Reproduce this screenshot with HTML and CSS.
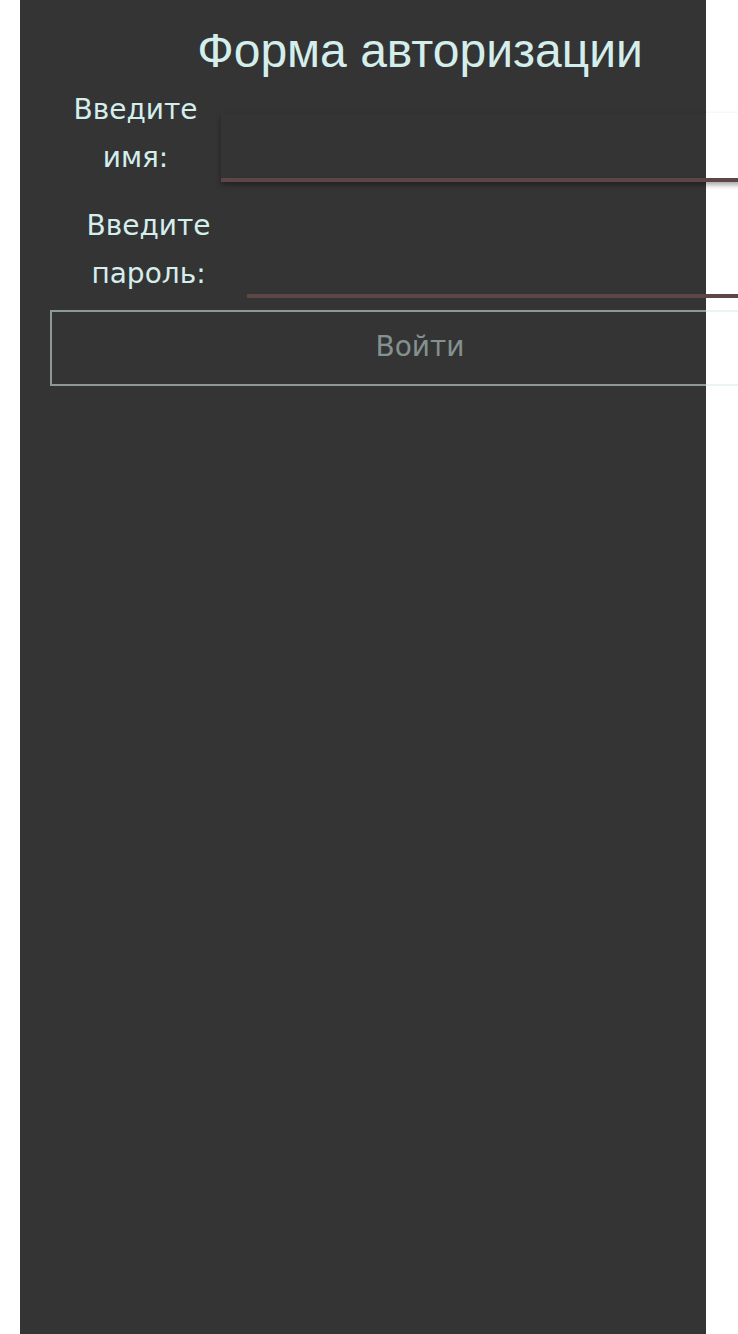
FILE: index.html
```html
<!DOCTYPE html>
<html lang="ru">
<head>
<meta charset="utf-8">
<title>Форма авторизации</title>
<link rel="stylesheet" href="styles.css">
</head>
<body>
<div class="page">
  <form class="auth">
    <h1 class="title">Форма авторизации</h1>
    <div class="row row-name">
      <label class="label label-name" for="name">Введите имя:</label>
      <input class="field field-name" id="name" type="text">
    </div>
    <div class="row row-pass">
      <label class="label label-pass" for="pass">Введите пароль:</label>
      <input class="field field-pass" id="pass" type="password">
    </div>
    <button class="submit" type="button">Войти</button>
  </form>
</div>
</body>
</html>
```

FILE: styles.css
```css
html {
  overflow: hidden;
}

body {
  margin: 0;
  background: #ffffff;
  font-family: "Liberation Sans", Arial, sans-serif;
}

.page {
  display: flow-root;
  margin-left: 20px;
  width: 686px;
  min-height: 1334px;
  background: #343434;
}

.auth {
  width: 740px;
  margin-left: 30px;
  display: flex;
  flex-direction: column;
}

.title {
  margin: 0;
  padding-top: 24px;
  font-size: 48px;
  font-weight: normal;
  line-height: 54px;
  text-align: center;
  color: #d4eeec;
}

.row {
  display: flex;
  align-items: flex-end;
}

.row-name {
  margin-top: 8px;
}

.row-pass {
  margin-top: 20px;
}

.label {
  flex: none;
  font-family: "DejaVu Sans", Verdana, sans-serif;
  font-size: 28px;
  line-height: 48px;
  text-align: center;
  color: #d4eeec;
}

.label-name {
  width: 171px;
}

.label-pass {
  width: 197px;
}

.field {
  flex: 1;
  min-width: 0;
  box-sizing: border-box;
  height: 69px;
  margin: 0;
  padding: 0 10px;
  border: none;
  border-bottom: 4px solid #5c4646;
  background: transparent;
  outline: none;
  font-family: inherit;
  font-size: 28px;
  color: #d4eeec;
}

.field-name {
  box-shadow: 0 3px 5px rgba(0, 0, 0, 0.35);
}

.submit {
  margin-top: 12px;
  box-sizing: border-box;
  width: 740px;
  height: 76px;
  padding: 0 0 3px;
  border: 2px solid rgba(212, 238, 236, 0.55);
  background: transparent;
  font-family: "DejaVu Sans", Verdana, sans-serif;
  font-size: 28px;
  line-height: 32px;
  color: rgba(212, 238, 236, 0.5);
}
```
